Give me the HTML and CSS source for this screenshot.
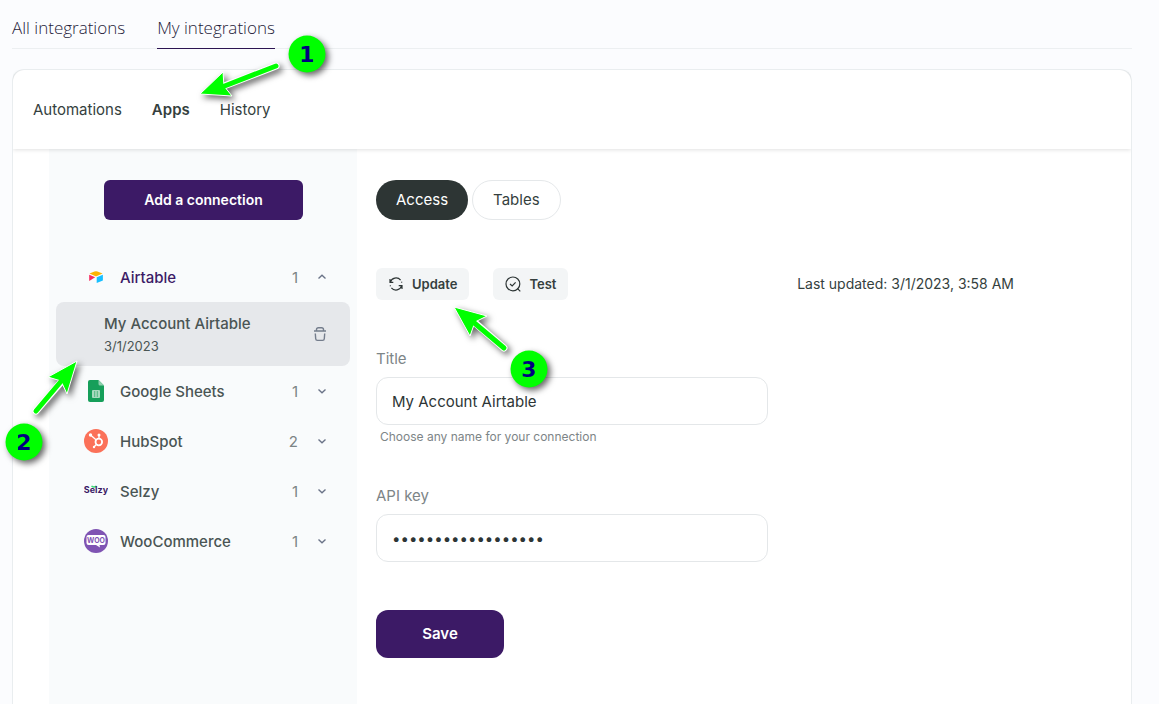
FILE: index.html
```
<!DOCTYPE html>
<html lang="en">
<head>
    <meta charset="UTF-8">
    <meta name="viewport" content="width=device-width, initial-scale=1.0">
    <title>My integrations</title>
    <link rel="stylesheet" href="styles.css">
</head>
<body>
    <nav class="top-tabs">
        <a href="#" class="top-tab">All integrations</a>
        <a href="#" class="top-tab active">My integrations</a>
    </nav>

    <main class="card">
        <nav class="card-tabs">
            <a href="#" class="card-tab">Automations</a>
            <a href="#" class="card-tab active">Apps</a>
            <a href="#" class="card-tab">History</a>
        </nav>

        <div class="card-body">
            <aside class="sidebar">
                <button class="btn-primary add-btn">Add a connection</button>

                <button class="app-row open">
                    <svg class="app-icon" viewBox="0 0 24 24">
                        <path d="M5.500 8.600 L10.500 6.600 Q12 6 13.500 6.600 L18.500 8.600 L13 11 Q12 11.400 11 11 Z" fill="#fcb400"/>
                        <path d="M12.700 12.200 L18.900 9.700 V15.500 L12.700 18 Z" fill="#18bfff"/>
                        <path d="M5.200 9.700 L11.200 12.200 L5.200 16 Z" fill="#f82b60"/>
                    </svg>
                    <span class="app-name">Airtable</span>
                    <span class="app-count">1</span>
                    <svg class="chevron" viewBox="0 0 12 12"><path d="M2.500 7.500 L6 4.300 L9.500 7.500"/></svg>
                </button>

                <div class="connection">
                    <div class="connection-info">
                        <div class="connection-name">My Account Airtable</div>
                        <div class="connection-date">3/1/2023</div>
                    </div>
                    <button class="delete-btn" aria-label="Delete connection">
                        <svg viewBox="0 0 14 16"><path d="M1 5 H13 M3.500 5 V3.600 Q3.500 1.700 5.400 1.700 H8.600 Q10.500 1.700 10.500 3.600 V5 M2.300 7.500 L2.700 12.800 Q2.800 14.400 4.400 14.400 H9.600 Q11.200 14.400 11.300 12.800 L11.700 7.500"/></svg>
                    </button>
                </div>

                <button class="app-row">
                    <svg class="app-icon" viewBox="0 0 24 24">
                        <path d="M6 1 H14.500 L20 6.500 V21 Q20 23 18 23 H6 Q4 23 4 21 V3 Q4 1 6 1 Z" fill="#169f5a"/>
                        <path d="M14.500 1 L20 6.500 H16 Q14.500 6.500 14.500 5 Z" fill="#8ed0ad"/>
                        <rect x="8" y="11" width="8" height="8" rx="1" fill="#a9dabf"/>
                        <path d="M10.700 12 V18 M13.300 12 V18" stroke="#52b883" stroke-width="1"/>
                    </svg>
                    <span class="app-name">Google Sheets</span>
                    <span class="app-count">1</span>
                    <svg class="chevron" viewBox="0 0 12 12"><path d="M2.500 4.500 L6 7.700 L9.500 4.500"/></svg>
                </button>

                <button class="app-row">
                    <svg class="app-icon" viewBox="0 0 24 24">
                        <circle cx="12" cy="12" r="12" fill="#fb7159"/>
                        <circle cx="14.800" cy="13" r="3.300" fill="none" stroke="#fff" stroke-width="1.800"/>
                        <path d="M15 9.500 V6 M12.300 11 L6.500 6 M12.300 15.500 L10 18" fill="none" stroke="#fff" stroke-width="1.300"/>
                        <circle cx="15" cy="6" r="1.500" fill="#fff"/>
                        <circle cx="6.500" cy="6" r="1.700" fill="#fff"/>
                        <circle cx="10" cy="18" r="1.200" fill="#fff"/>
                    </svg>
                    <span class="app-name">HubSpot</span>
                    <span class="app-count">2</span>
                    <svg class="chevron" viewBox="0 0 12 12"><path d="M2.500 4.500 L6 7.700 L9.500 4.500"/></svg>
                </button>

                <button class="app-row">
                    <svg class="app-icon" viewBox="0 0 24 24">
                        <path d="M7.500 7 Q10 9 12.500 7" fill="none" stroke="#3ddc78" stroke-width="1.600"/>
                        <text x="12" y="14" text-anchor="middle" class="selzy-text">Selzy</text>
                    </svg>
                    <span class="app-name">Selzy</span>
                    <span class="app-count">1</span>
                    <svg class="chevron" viewBox="0 0 12 12"><path d="M2.500 4.500 L6 7.700 L9.500 4.500"/></svg>
                </button>

                <button class="app-row">
                    <svg class="app-icon" viewBox="0 0 24 24">
                        <circle cx="12" cy="12" r="12" fill="#7f54b3"/>
                        <path d="M4.500 6 H19.500 Q21.500 6 21.500 8 V14 Q21.500 16 19.500 16 H15.500 L16 18.500 L12 16 H4.500 Q2.500 16 2.500 14 V8 Q2.500 6 4.500 6 Z" fill="#fff"/>
                        <text x="12" y="13.500" text-anchor="middle" class="woo-text">WOO</text>
                    </svg>
                    <span class="app-name">WooCommerce</span>
                    <span class="app-count">1</span>
                    <svg class="chevron" viewBox="0 0 12 12"><path d="M2.500 4.500 L6 7.700 L9.500 4.500"/></svg>
                </button>
            </aside>

            <section class="content">
                <div class="pills">
                    <button class="pill active">Access</button>
                    <button class="pill">Tables</button>
                </div>

                <div class="toolbar">
                    <button class="btn-tool">
                        <svg viewBox="0 0 16 16"><path d="M2 3 V6.300 H5.300 M2.300 6.300 A5.900 5.900 0 0 1 12.600 4.200 M14 13 V9.700 H10.700 M13.700 9.700 A5.900 5.900 0 0 1 3.400 11.800 M13.500 5.700 L13.800 6.600 M2.500 10.300 L2.200 9.400"/></svg>
                        Update
                    </button>
                    <button class="btn-tool">
                        <svg viewBox="0 0 16 16"><path d="M12.300 12.300 L15.300 15.300 M5 8 L7.200 10 L10.600 6.400"/><circle cx="7.900" cy="7.900" r="6.900"/></svg>
                        Test
                    </button>
                    <span class="updated">Last updated: 3/1/2023, 3:58 AM</span>
                </div>

                <form class="form">
                    <label for="title">Title</label>
                    <input type="text" id="title" value="My Account Airtable">
                    <div class="hint">Choose any name for your connection</div>

                    <label for="key">API key</label>
                    <input type="password" id="key" value="keyA1b2C3d4E5f6G7h">

                    <button type="button" class="btn-primary save-btn">Save</button>
                </form>
            </section>
        </div>
    </main>

    <!-- numbered steps -->
    <svg class="steps" width="560" height="480" viewBox="0 0 560 480">
        <g class="step">
            <path class="arrow-outline" d="M276 66 L224 86"/>
            <path class="arrow-head" d="M200 94 L223 72 L224 86 L232 96 Z"/>
            <path class="arrow-line" d="M276 66 L222 87"/>
            <circle cx="307" cy="54" r="18.500"/>
            <text x="307" y="62">1</text>
        </g>
        <g class="step">
            <path class="arrow-outline" d="M36 411 L62 381"/>
            <path class="arrow-head" d="M77 361 L48 377 L61 381 L67 394 Z"/>
            <path class="arrow-line" d="M36 411 L63 379"/>
            <circle cx="24" cy="442" r="18.500"/>
            <text x="24" y="450">2</text>
        </g>
        <g class="step">
            <path class="arrow-outline" d="M504 348 L474 322"/>
            <path class="arrow-head" d="M454 307 L487 316 L475 322 L470 336 Z"/>
            <path class="arrow-line" d="M504 348 L472 321"/>
            <circle cx="529" cy="369" r="18.500"/>
            <text x="529" y="377">3</text>
        </g>
    </svg>
</body>
</html>
```
FILE: styles.css
```
* {
    margin: 0;
    padding: 0;
    box-sizing: border-box;
}
body {
    display: flex;
    flex-direction: column;
    position: relative;
    min-height: 100vh;
    padding: 0 27px 0 12px;
    background: #fbfcfe;
    color: #353f3e;
    font-family: Inter, "Liberation Sans", sans-serif;
    font-size: 15px;
    line-height: 20px;
}
a {
    color: inherit;
    text-decoration: none;
}
button {
    border: none;
    background: none;
    color: inherit;
    font: inherit;
    cursor: pointer;
}
.top-tabs {
    display: flex;
    gap: 32px;
    height: 49px;
    margin-bottom: 20px;
    border-bottom: 1px solid #eceff1;
    font-family: "Open Sans", sans-serif;
    font-size: 17px;
    font-weight: 300;
    color: #1f1b3a;
}
.top-tab {
    height: 49px;
    padding-top: 18px;
}
.top-tab.active {
    border-bottom: 1px solid #2c1452;
}
.card {
    display: flex;
    flex-direction: column;
    flex: 1;
    border: 1px solid #e9edef;
    border-bottom: none;
    border-radius: 12px 12px 0 0;
    background: #fff;
}
.card-tabs {
    display: flex;
    align-items: center;
    gap: 30px;
    height: 79px;
    padding: 0 20px;
    border-radius: 12px 12px 0 0;
    box-shadow: 0 1px 4px rgba(0, 0, 0, 0.12);
    clip-path: inset(0 0 -8px 0);
    position: relative;
}
.card-tab.active {
    font-weight: 600;
}
.card-body {
    display: flex;
    flex: 1;
}
.sidebar {
    width: 308px;
    margin-left: 36px;
    padding: 31px 7px;
    background: #f9fbfc;
}
.btn-primary {
    background: #3c1a66;
    color: #fff;
    font-weight: 600;
}
.add-btn {
    display: block;
    width: 199px;
    height: 40px;
    margin: 0 auto 32px 48px;
    border-radius: 6px;
    font-size: 14px;
}
.app-row {
    display: flex;
    align-items: center;
    width: 100%;
    height: 50px;
    padding: 0 22px 0 28px;
    color: #4a5554;
    text-align: left;
}
.app-icon {
    width: 24px;
    height: 24px;
    margin-right: 12px;
}
.app-name {
    flex: 1;
    padding-top: 2px;
    font-weight: 500;
}
.app-row.open .app-name {
    color: #3c1a66;
}
.app-count {
    margin-right: 18px;
    padding-top: 2px;
    color: #7c8485;
}
.chevron {
    width: 12px;
    height: 12px;
    fill: none;
    stroke: #6b7488;
    stroke-width: 1.4;
}
.selzy-text {
    font: 700 9px Inter, sans-serif;
    fill: #3c1a66;
}
.woo-text {
    font: 700 7px Inter, sans-serif;
    fill: #7f54b3;
}
.connection {
    display: flex;
    align-items: center;
    justify-content: space-between;
    height: 64px;
    padding: 0 23px 0 48px;
    border-radius: 8px;
    background: #e6e8eb;
    color: #4a5554;
}
.connection-name {
    line-height: 24px;
    font-weight: 500;
}
.connection-date {
    font-size: 13px;
}
.delete-btn svg {
    display: block;
    width: 14px;
    height: 16px;
    fill: none;
    stroke: #747d8c;
    stroke-width: 1.4;
}
.content {
    flex: 1;
    padding: 31px 20px 31px 19px;
}
.pills {
    display: flex;
    gap: 4px;
    margin-bottom: 48px;
}
.pill {
    height: 40px;
    padding: 0 20px;
    border: 1px solid #e5e8ea;
    border-radius: 20px;
}
.pill.active {
    border: none;
    background: #2d3534;
    color: #fff;
}
.toolbar {
    display: flex;
    align-items: center;
    gap: 24px;
    margin-bottom: 49px;
    padding-right: 97px;
}
.btn-tool {
    display: flex;
    align-items: center;
    gap: 8px;
    height: 32px;
    padding: 0 12px;
    border-radius: 6px;
    background: #f3f5f6;
    font-size: 13px;
    font-weight: 600;
}
.btn-tool svg {
    width: 16px;
    height: 16px;
    fill: none;
    stroke: #2d3535;
    stroke-width: 1.2;
}
.updated {
    margin-left: auto;
    font-size: 14px;
}
.form {
    max-width: 392px;
}
.form label {
    display: block;
    margin-bottom: 8px;
    color: #7d8587;
}
.form input {
    display: block;
    width: 100%;
    height: 48px;
    padding: 0 15px;
    border: 1px solid #e4e7e9;
    border-radius: 12px;
    background: #fff;
    color: #2d3535;
    font: inherit;
}
.hint {
    margin: 2px 4px 39px;
    color: #7d8587;
    font-size: 12px;
}
.save-btn {
    width: 128px;
    height: 48px;
    margin-top: 48px;
    border-radius: 12px;
}
.steps {
    position: absolute;
    top: 0;
    left: 0;
    pointer-events: none;
}
.step {
    fill: #00ff00;
    filter: drop-shadow(3px 3px 3px rgba(0, 0, 0, 0.6));
}
.step text {
    fill: #000080;
    font: bold 22px "DejaVu Sans", sans-serif;
    text-anchor: middle;
}
.arrow-outline {
    stroke: #fff;
    stroke-width: 7;
    stroke-linecap: round;
}
.arrow-head {
    stroke: #fff;
    stroke-width: 1;
    stroke-linejoin: round;
}
.arrow-line {
    stroke: #00ff00;
    stroke-width: 5;
    stroke-linecap: round;
}
```
